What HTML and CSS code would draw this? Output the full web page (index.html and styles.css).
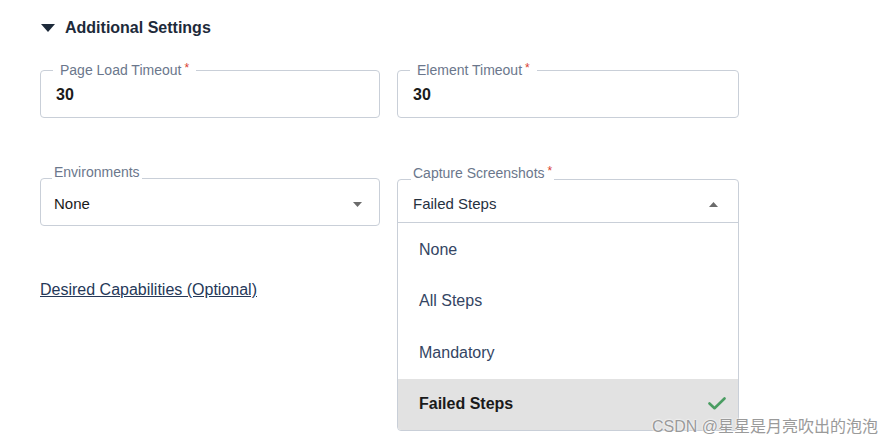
FILE: index.html
```html
<!DOCTYPE html>
<html lang="en">
<head>
<meta charset="utf-8">
<title>Additional Settings</title>
<link rel="stylesheet" href="styles.css">
</head>
<body>
<div class="page">
  <div class="heading">
    <svg class="heading-caret" width="14" height="8" viewBox="0 0 14 8"><path d="M0 0 L14 0 L7 8 Z" fill="#1d2a3a"/></svg>
    <span class="heading-text">Additional Settings</span>
  </div>

  <div class="row row-1">
    <div class="field field-input">
      <div class="legend">Page Load Timeout<span class="req">*</span></div>
      <div class="value value-num">30</div>
    </div>
    <div class="field field-input">
      <div class="legend">Element Timeout<span class="req">*</span></div>
      <div class="value value-num">30</div>
    </div>
  </div>

  <div class="row row-2">
    <div class="col">
      <div class="field field-env">
        <div class="legend legend-above legend-env">Environments</div>
        <div class="value value-select">
          <span>None</span>
          <svg width="9" height="5" viewBox="0 0 9 5"><path d="M0 0 L9 0 L4.5 5 Z" fill="#6b6b6b"/></svg>
        </div>
      </div>
      <a class="link" href="#">Desired Capabilities (Optional)</a>
    </div>
    <div class="col">
      <div class="field field-capture">
        <div class="capture-head">
          <div class="legend legend-above legend-capture">Capture Screenshots<span class="req">*</span></div>
          <div class="value value-select value-capture">
            <span>Failed Steps</span>
            <svg width="9" height="5" viewBox="0 0 9 5"><path d="M0 5 L9 5 L4.5 0 Z" fill="#6b6b6b"/></svg>
          </div>
        </div>
        <ul class="options">
          <li class="option">None</li>
          <li class="option">All Steps</li>
          <li class="option">Mandatory</li>
          <li class="option option-selected">
            <span>Failed Steps</span>
            <svg width="18" height="13" viewBox="0 0 18 13"><path d="M1.5 6.5 L6.5 11.2 L16.5 1.5" fill="none" stroke="#4a9d62" stroke-width="2.6" stroke-linecap="round" stroke-linejoin="round"/></svg>
          </li>
        </ul>
      </div>
    </div>
  </div>
</div>
<div class="watermark">CSDN @星星是月亮吹出的泡泡</div>
</body>
</html>
```

FILE: styles.css
```css
html, body {
  margin: 0;
  padding: 0;
  background: #ffffff;
}

body {
  font-family: "Liberation Sans", Arial, "Noto Sans CJK SC", sans-serif;
  color: #1a1a1a;
  position: relative;
  min-height: 446px;
}

.page {
  padding: 18px 0 0 40px;
}

.heading {
  display: flex;
  align-items: center;
  height: 20px;
}

.heading-caret {
  margin-left: 1px;
  display: block;
}

.heading-text {
  margin-left: 10px;
  font-size: 16px;
  line-height: 20px;
  font-weight: bold;
  color: #1d2a3a;
}

.row {
  display: grid;
  grid-template-columns: 340px 342px;
  column-gap: 17px;
  align-items: start;
}

.row-1 {
  margin-top: 32px;
}

.row-2 {
  margin-top: 60px;
}

.col {
  display: flex;
  flex-direction: column;
  align-items: flex-start;
}

.field {
  border: 1px solid #c9cfd8;
  border-radius: 4px;
  background: #ffffff;
  box-sizing: border-box;
  width: 100%;
}

.field-input {
  padding: 0 15px 12px;
}

.legend {
  width: fit-content;
  background: #ffffff;
  font-size: 14px;
  line-height: 16px;
  height: 16px;
  color: #6b778c;
  white-space: nowrap;
}

.field-input .legend {
  margin: -9px 0 0 -3px;
  padding: 0 7px;
}

.req {
  color: #d9412f;
  font-size: 12px;
  line-height: 0;
  margin-left: 3px;
  vertical-align: 3px;
}

.value {
  line-height: 20px;
}

.value-num {
  margin-top: 7px;
  font-size: 16px;
  font-weight: bold;
  color: #1a1a1a;
}

.legend-above {
  margin-top: -15px;
}

.legend-env {
  margin-left: -2px;
  padding: 0 2px;
}

.field-env {
  padding: 0 17px 11px 13px;
}

.value-select {
  display: flex;
  justify-content: space-between;
  align-items: center;
  margin-top: 14px;
  font-size: 15px;
  color: #1a1a1a;
}

.field-capture {
  margin-top: 1px;
}

.capture-head {
  padding: 0 20px 8px 15px;
  border-bottom: 1px solid #c9cfd8;
}

.legend-capture {
  margin-left: -2px;
  padding: 0 2px;
}

.value-capture {
  margin-top: 13px;
  color: #26313f;
}

.value-capture svg {
  margin-top: 1px;
}

.options {
  list-style: none;
  margin: 0;
  padding: 1px 0 0;
}

.option {
  height: 51.5px;
  display: flex;
  align-items: center;
  justify-content: space-between;
  padding: 0 12px 0 21px;
  font-size: 16px;
  color: #344563;
}

.option-selected {
  background: #e2e2e2;
  color: #1a1a1a;
  font-weight: bold;
  border-radius: 0 0 3px 3px;
}

.option-selected svg {
  margin-bottom: 2px;
}

.link {
  margin-top: 54px;
  font-size: 16px;
  line-height: 20px;
  color: #253858;
  text-decoration: underline;
}

.watermark {
  position: absolute;
  right: 16px;
  top: 417px;
  font-size: 16px;
  line-height: 20px;
  color: #9a9a9a;
  text-shadow: 0 0 2px #ffffff, 0 0 2px #ffffff;
  white-space: nowrap;
}
```
